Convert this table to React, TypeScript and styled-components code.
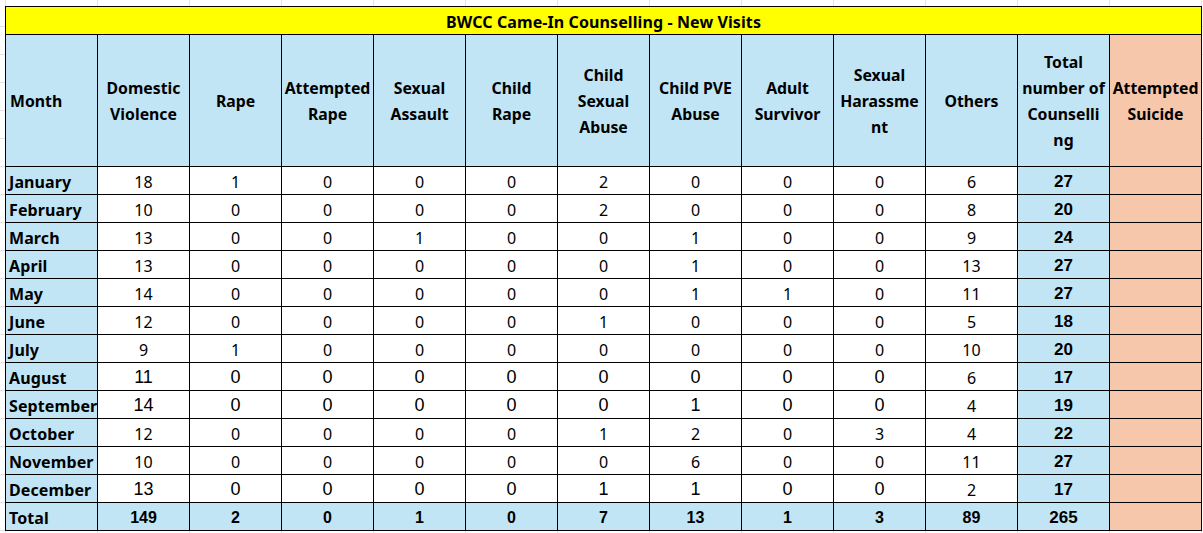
import React from 'react';
import styled, { createGlobalStyle } from 'styled-components';

const GlobalStyle = createGlobalStyle`
  html, body {
    margin: 0;
    padding: 0;
    background-color: #ffffff;
    background-image:
      repeating-linear-gradient(90deg, transparent 0 5px, #e3e3e3 5px 6px, transparent 6px 92px),
      repeating-linear-gradient(180deg, transparent 0 26px, #e3e3e3 26px 27px, transparent 27px 28px);
    color: #000;
  }
`;

const Sheet = styled.div`
  padding: 6px 0 0 5px;
  width: 1203px;
  height: 533px;
  box-sizing: border-box;
  overflow: hidden;
`;

const Table = styled.table`
  border-collapse: collapse;
  table-layout: fixed;
  width: 1197px;
  background: #fff;
  font-family: 'Noto Sans', 'Liberation Sans', sans-serif;
`;

const Col = styled.col`
  width: 92px;
`;

const TitleCell = styled.td`
  height: 27px;
  padding: 0;
  background: #ffff00;
  border: 1px solid #000;
  text-align: center;
  vertical-align: bottom;
  font-weight: 700;
  font-size: 16px;
  letter-spacing: 0.1px;
  line-height: 24px;
`;

const HeadRow = styled.tr`
  height: 132px;
`;

const HeadCell = styled.th<{ $tone?: 'blue' | 'peach'; $left?: boolean }>`
  padding: ${p => (p.$left ? '0 0 0 4px' : '0')};
  background: ${p => (p.$tone === 'peach' ? '#f7c7ac' : '#c1e5f5')};
  border: 1px solid #000;
  text-align: ${p => (p.$left ? 'left' : 'center')};
  vertical-align: middle;
  font-weight: 700;
  font-size: 15.8px;
  line-height: 26px;
  white-space: nowrap;
  overflow: hidden;
`;

const Row = styled.tr`
  height: 28px;
`;

const MonthCell = styled.td`
  padding: 0 0 0 3px;
  background: #c1e5f5;
  border: 1px solid #000;
  text-align: left;
  vertical-align: bottom;
  font-weight: 700;
  font-size: 16px;
  letter-spacing: 0.1px;
  line-height: 24px;
  white-space: nowrap;
  overflow: hidden;
`;

const ValueCell = styled.td<{ $big?: boolean; $total?: boolean }>`
  padding: 0;
  background: ${p => (p.$total ? '#c1e5f5' : '#fff')};
  border: 1px solid #000;
  text-align: center;
  vertical-align: bottom;
  font-family: ${p => (p.$big || p.$total ? "'Liberation Sans', Arial, sans-serif" : "'Noto Sans', sans-serif")};
  font-weight: ${p => (p.$total ? 700 : 400)};
  font-size: ${p => (p.$total ? '16px' : p.$big ? '18px' : '16px')};
  line-height: ${p => (p.$big ? '25px' : '24px')};
`;

const SumCell = styled.td`
  padding: 0;
  background: #c1e5f5;
  border: 1px solid #000;
  text-align: center;
  vertical-align: bottom;
  font-family: 'Liberation Sans', Arial, sans-serif;
  font-weight: 700;
  font-size: 17px;
  line-height: 25px;
`;

const EmptyCell = styled.td`
  padding: 0;
  background: #f7c7ac;
  border: 1px solid #000;
`;

const headers: string[][] = [
  ['Domestic', 'Violence'],
  ['Rape'],
  ['Attempted', 'Rape'],
  ['Sexual', 'Assault'],
  ['Child', 'Rape'],
  ['Child', 'Sexual', 'Abuse'],
  ['Child PVE', 'Abuse'],
  ['Adult', 'Survivor'],
  ['Sexual', 'Harassme', 'nt'],
  ['Others'],
  ['Total', 'number of', 'Counselli', 'ng'],
];

interface MonthRow {
  month: string;
  values: number[];
  total: number;
  big?: boolean;
}

const rows: MonthRow[] = [
  { month: 'January', values: [18, 1, 0, 0, 0, 2, 0, 0, 0, 6], total: 27 },
  { month: 'February', values: [10, 0, 0, 0, 0, 2, 0, 0, 0, 8], total: 20 },
  { month: 'March', values: [13, 0, 0, 1, 0, 0, 1, 0, 0, 9], total: 24 },
  { month: 'April', values: [13, 0, 0, 0, 0, 0, 1, 0, 0, 13], total: 27 },
  { month: 'May', values: [14, 0, 0, 0, 0, 0, 1, 1, 0, 11], total: 27 },
  { month: 'June', values: [12, 0, 0, 0, 0, 1, 0, 0, 0, 5], total: 18 },
  { month: 'July', values: [9, 1, 0, 0, 0, 0, 0, 0, 0, 10], total: 20 },
  { month: 'August', values: [11, 0, 0, 0, 0, 0, 0, 0, 0, 6], total: 17, big: true },
  { month: 'September', values: [14, 0, 0, 0, 0, 0, 1, 0, 0, 4], total: 19, big: true },
  { month: 'October', values: [12, 0, 0, 0, 0, 1, 2, 0, 3, 4], total: 22 },
  { month: 'November', values: [10, 0, 0, 0, 0, 0, 6, 0, 0, 11], total: 27 },
  { month: 'December', values: [13, 0, 0, 0, 0, 1, 1, 0, 0, 2], total: 17, big: true },
];

const totals = [149, 2, 0, 1, 0, 7, 13, 1, 3, 89];

const Lines: React.FC<{ lines: string[] }> = ({ lines }) => (
  <>
    {lines.map((l, i) => (
      <React.Fragment key={i}>
        {i > 0 && <br />}
        {l}
      </React.Fragment>
    ))}
  </>
);

export default function App() {
  return (
    <>
      <GlobalStyle />
      <Sheet>
        <Table>
          <colgroup>
            {Array.from({ length: 13 }).map((_, i) => (
              <Col key={i} />
            ))}
          </colgroup>
          <tbody>
            <tr>
              <TitleCell colSpan={13}>BWCC Came-In Counselling - New Visits</TitleCell>
            </tr>
            <HeadRow>
              <HeadCell $left>Month</HeadCell>
              {headers.map((h, i) => (
                <HeadCell key={i}>
                  <Lines lines={h} />
                </HeadCell>
              ))}
              <HeadCell $tone="peach">
                <Lines lines={['Attempted', 'Suicide']} />
              </HeadCell>
            </HeadRow>
            {rows.map(r => (
              <Row key={r.month}>
                <MonthCell>{r.month}</MonthCell>
                {r.values.map((v, i) => (
                  <ValueCell key={i} $big={r.big && i < 9}>
                    {v}
                  </ValueCell>
                ))}
                <SumCell>{r.total}</SumCell>
                <EmptyCell />
              </Row>
            ))}
            <Row>
              <MonthCell>Total</MonthCell>
              {totals.map((v, i) => (
                <ValueCell key={i} $total>
                  {v}
                </ValueCell>
              ))}
              <SumCell>265</SumCell>
              <EmptyCell />
            </Row>
          </tbody>
        </Table>
      </Sheet>
    </>
  );
}
